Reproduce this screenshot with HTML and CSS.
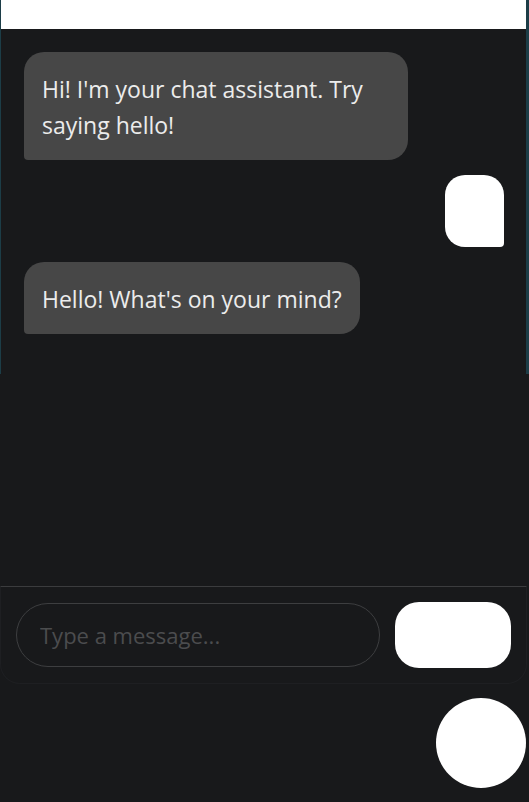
FILE: index.html
```html
<!DOCTYPE html>
<html lang="en">
<head>
<meta charset="utf-8">
<title>Chat</title>
<link rel="stylesheet" href="styles.css">
</head>
<body>
<div class="app">
  <section class="chat">
    <header class="chat-header"></header>
    <div class="messages">
      <div class="msg msg-bot">Hi! I'm your chat assistant. Try saying hello!</div>
      <div class="msg msg-user"><span class="msg-user-text"></span></div>
      <div class="msg msg-bot">Hello! What's on your mind?</div>
    </div>
  </section>
  <div class="spacer"></div>
  <footer class="composer">
    <input class="composer-input" type="text" placeholder="Type a message...">
    <button class="composer-send" type="button"></button>
  </footer>
</div>
<button class="fab" type="button" aria-label="Open chat"></button>
</body>
</html>
```

FILE: styles.css
```css
* { box-sizing: border-box; }
html, body {
  margin: 0;
  padding: 0;
  background: #18191b;
  height: 100%;
}
body {
  font-family: "Open Sans", "Noto Sans", sans-serif;
  color: #ececec;
}
.app {
  display: flex;
  flex-direction: column;
  height: 684px;
}
.chat {
  height: 374px;
  border-left: 1px solid #1c3d47;
  border-right: 3px solid #1c3d47;
  display: flex;
  flex-direction: column;
}
.chat-header {
  height: 29px;
  background: #ffffff;
  flex: none;
}
.messages {
  display: flex;
  flex-direction: column;
  gap: 15px;
  padding: 23px 22px 0 23px;
}
.msg {
  max-width: 80%;
  padding: 18px 18px;
  font-size: 23px;
  line-height: 36px;
  border-radius: 20px;
}
.msg-bot {
  align-self: flex-start;
  background: #474747;
  border-bottom-left-radius: 4px;
  padding-top: 19px;
  padding-bottom: 17px;
}
.msg-user {
  align-self: flex-end;
  background: #ffffff;
  border-bottom-right-radius: 4px;
  height: 72px;
}
.msg-user-text {
  display: block;
  width: 23px;
  height: 36px;
}
.spacer { flex: 1; }
.composer {
  display: flex;
  align-items: center;
  gap: 15px;
  margin: 0 2px 0 0;
  padding: 15px 14px 15px 15px;
  border-top: 1px solid #3b3c3e;
  border-left: 1px solid #1e1f22;
  border-right: 1px solid #1e1f22;
  border-bottom: 1px solid #1e1f22;
  border-radius: 0 0 20px 20px;
}
.composer-input {
  width: 364px;
  height: 64px;
  flex: none;
  background: transparent;
  border: 1px solid #3d3e40;
  border-radius: 32px;
  padding: 0 23px;
  font-family: "Open Sans", "Noto Sans", sans-serif;
  font-size: 22px;
  color: #e0e0e0;
  outline: none;
}
.composer-input::placeholder { color: #4b4c4e; }
.composer-send {
  width: 116px;
  height: 66px;
  flex: none;
  background: #ffffff;
  border: none;
  border-radius: 24px;
  padding: 0;
}
.fab {
  position: fixed;
  right: 3px;
  bottom: 14px;
  width: 90px;
  height: 90px;
  border-radius: 50%;
  background: #ffffff;
  border: none;
  padding: 0;
}
```
